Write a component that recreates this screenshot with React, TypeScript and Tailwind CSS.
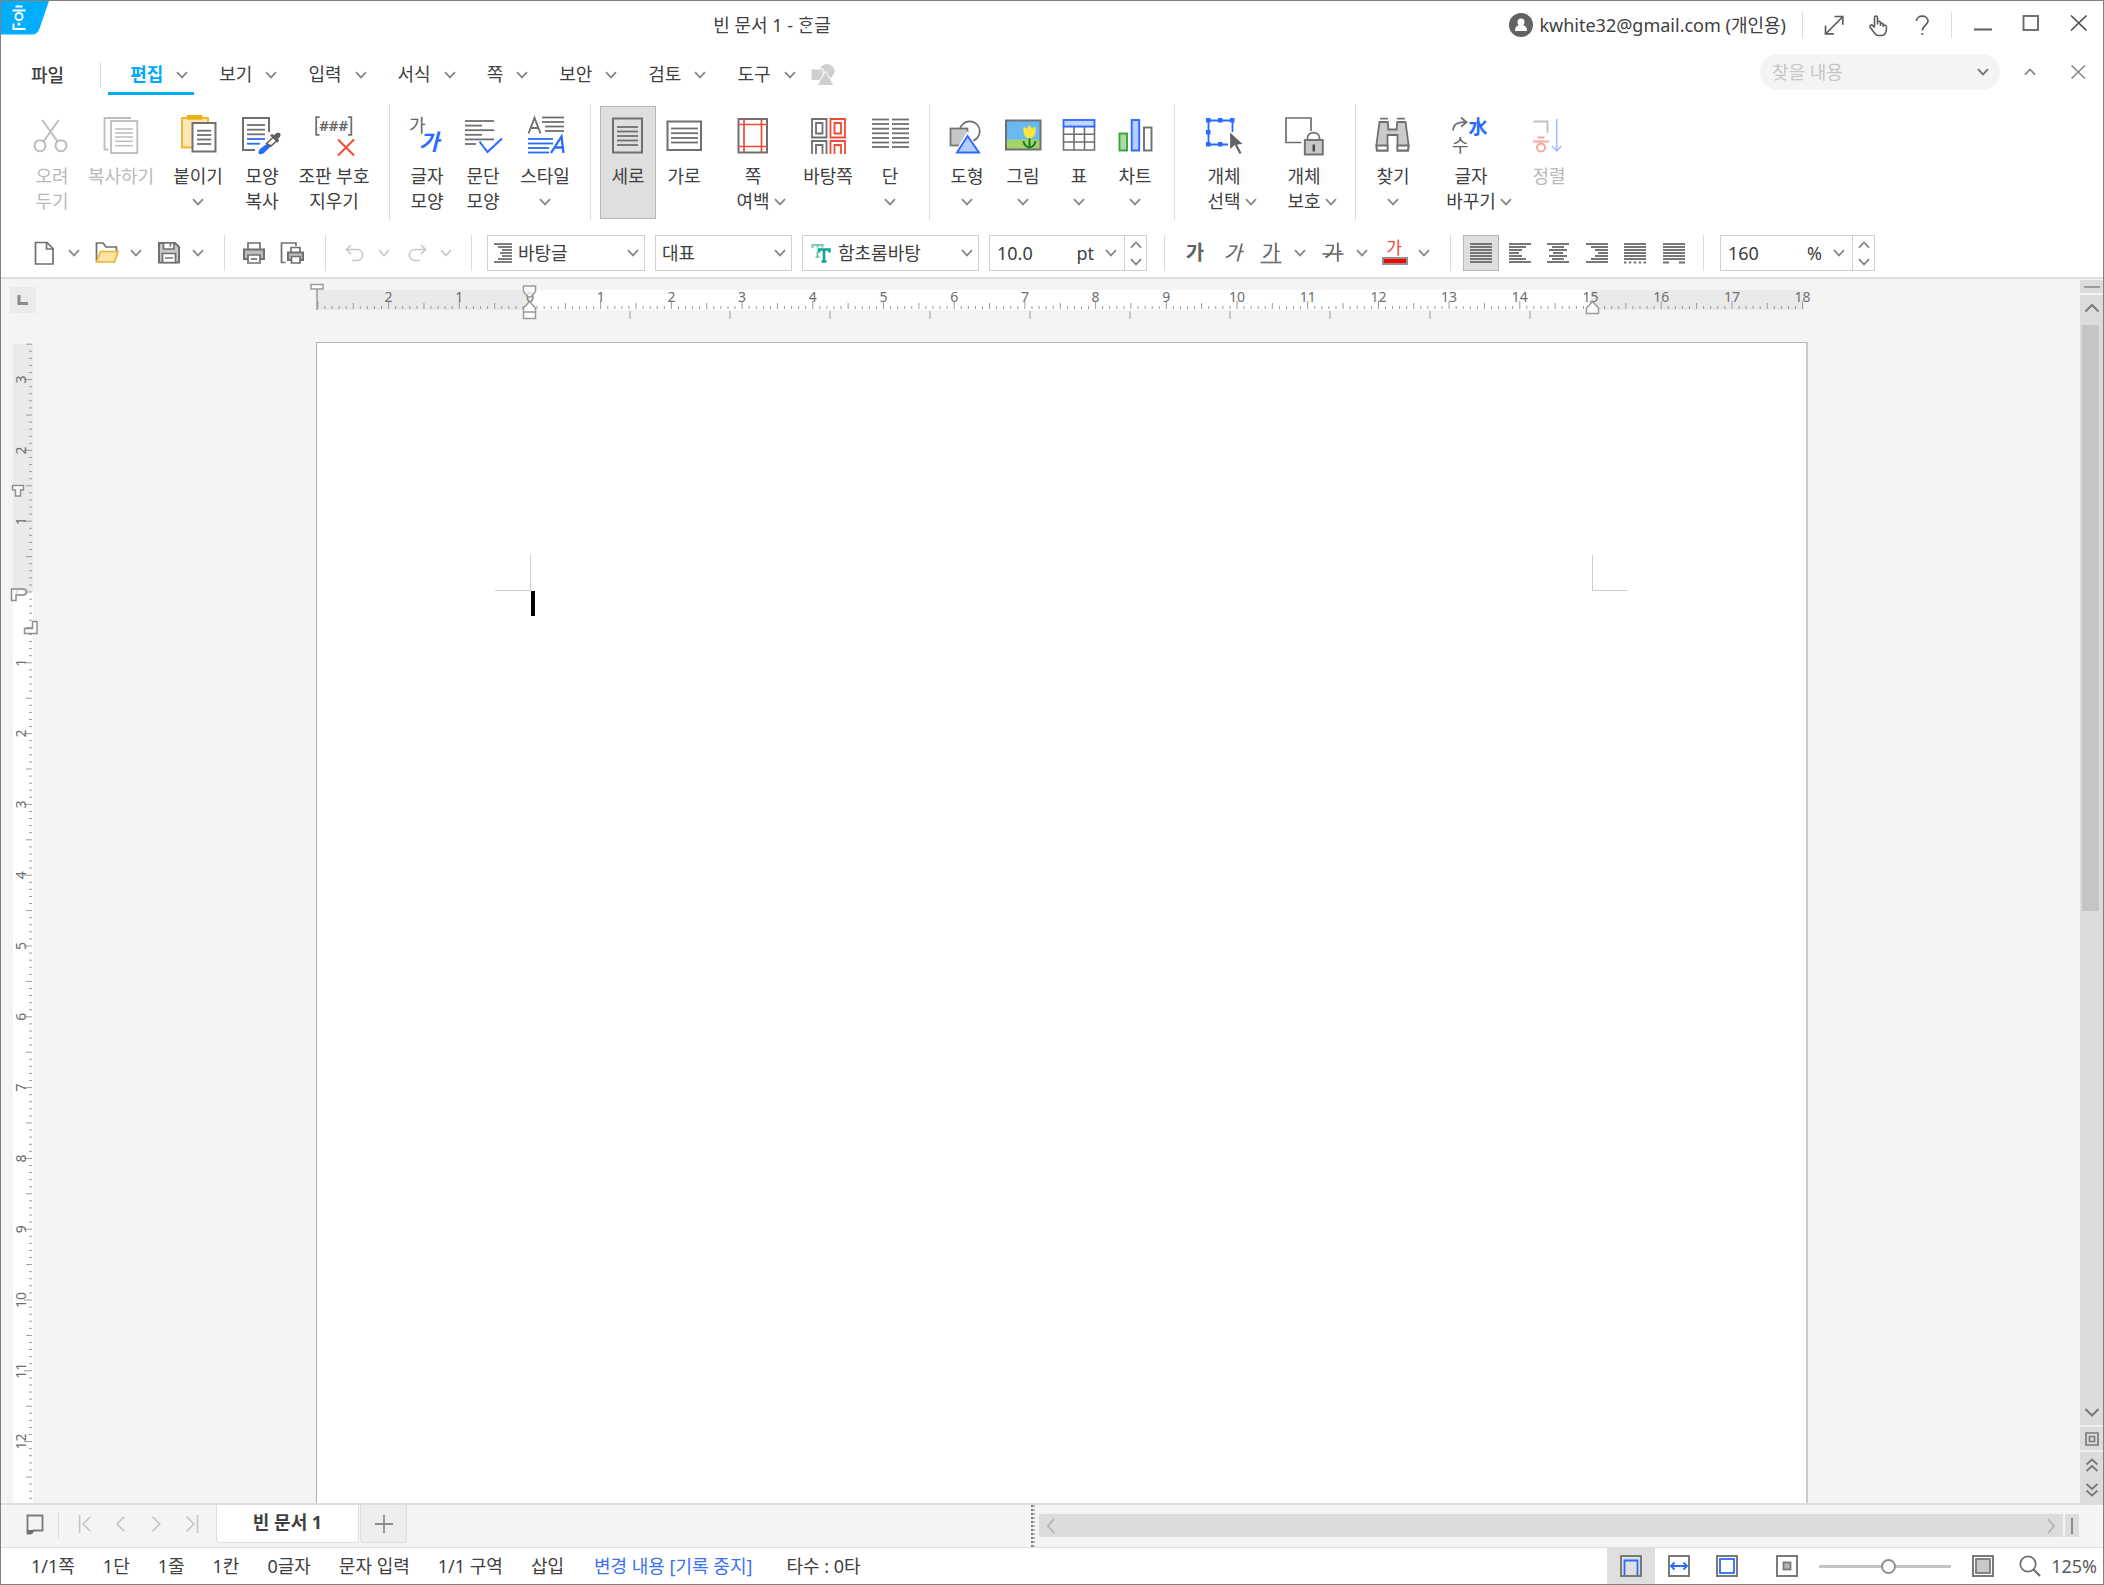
import type { ReactNode } from 'react';

const GRAY = '#707070';
const BLUE = '#2a6bff';
const RED = '#f04a36';
const FONT = "font-['Noto_Sans','Noto_Sans_CJK_KR',sans-serif]";

const range = (from: number, to: number) =>
  Array.from({ length: to - from + 1 }, (_, i) => from + i);

/* ---------- small shared pieces ---------- */

function Chevron({ dir = 'down', color = '#858585' }: { dir?: 'down' | 'up'; color?: string }) {
  return (
    <svg className="h-2 w-3 shrink-0" viewBox="0 0 12 8" fill="none" stroke={color} strokeWidth="1.7">
      <path d={dir === 'down' ? 'M1 1.2 6 6.4 11 1.2' : 'M1 6.6 6 1.4 11 6.6'} />
    </svg>
  );
}

function Divider({ className = '' }: { className?: string }) {
  return <span className={`w-px shrink-0 bg-[#dcdcdc] ${className}`} />;
}

function Lines({ x1, x2, ys, color = GRAY, w = 1.8 }: { x1: number; x2: number; ys: number[]; color?: string; w?: number }) {
  return (
    <g stroke={color} strokeWidth={w}>
      {ys.map((y) => (
        <line key={y} x1={x1} x2={x2} y1={y} y2={y} />
      ))}
    </g>
  );
}

/* ---------- ribbon icons, drawn on a 44x42 grid ---------- */

const icons: Record<string, ReactNode> = {
  cut: (
    <g stroke="#bdbdbd" strokeWidth="2">
      <circle cx="10" cy="31.7" r="5.5" />
      <circle cx="31" cy="31.7" r="5.5" />
      <path d="M12.3 6 27.5 27.5M28.7 6 13.5 27.5" />
    </g>
  ),
  copy: (
    <g stroke="#bdbdbd" strokeWidth="1.8">
      <path d="M32 4H5.5v31.5h4" />
      <rect x="12" y="7" width="26.3" height="32" />
      <Lines x1={16} x2={34} ys={[15, 19, 23, 27.3, 31.7]} color="#bdbdbd" w={1.5} />
    </g>
  ),
  paste: (
    <g>
      <rect x="6" y="4" width="26" height="29.5" fill="#fde6b3" stroke="#f2b632" strokeWidth="2" />
      <rect x="11" y="1" width="15.5" height="4.7" fill="#f0b017" />
      <rect x="16.5" y="9" width="23" height="28.5" fill="#fff" stroke={GRAY} strokeWidth="2" />
      <Lines x1={21} x2={35.3} ys={[16.7, 21, 25.5, 30]} />
    </g>
  ),
  format: (
    <g>
      <path d="M15 36H3V4h26v14" stroke={GRAY} strokeWidth="2" />
      <Lines x1={7} x2={25} ys={[11, 15.7, 20.3]} />
      <Lines x1={7} x2={25} ys={[25]} color={BLUE} />
      <Lines x1={7} x2={20} ys={[29.7]} color={BLUE} />
      <path d="m33 24-11.5 8.5c-2 2-3 4.5-2.5 6.2 1.8 1 4 0 5.5-1.5L35 27z" fill="#fff" />
      <path d="M32 26 27.5 29.5l-6.500 4.500c-2 2-3 4-2.500 5.500 1.800 1.200 4.500.8 6.500-1.500L34.500 29z" fill={BLUE} />
      <path d="m26.500 29.500 7-6.500 3.500 3.500-6 5.500z" fill="#fff" stroke="#5f5f5f" strokeWidth="1.500" />
      <path d="m30 21.500 2-1.500 2.200 1.200c1-2 3.500-3.200 5.500-2.200 1.800 1.800.5 4.500-1.500 5.600l.8 2.200-1.600 2z" fill="#5f5f5f" />
    </g>
  ),
  marks: (
    <g>
      <path d="M7.5 3.2H4.2v17.600h3.300M36 3.200h3.300v17.600H36" stroke={GRAY} strokeWidth="1.8" />
      <text x="21.700" y="16.5" textAnchor="middle" fontSize="15" fontWeight="600" fill="#666">###</text>
      <path d="m26 25.500 16 16m0-16-16 16" stroke={RED} strokeWidth="2" />
    </g>
  ),
  charShape: (
    <g>
      <text x="4" y="18" fontSize="18" fill="#666">가</text>
      <text x="14" y="36" fontSize="22" fontWeight="700" fontStyle="italic" fill={BLUE}>가</text>
    </g>
  ),
  paraShape: (
    <g>
      <Lines x1={4} x2={33} ys={[7, 16.2, 25.4]} />
      <Lines x1={4} x2={21} ys={[11.6, 20.8]} />
      <Lines x1={4} x2={15} ys={[30]} />
      <path d="m18.500 27.500 8 10.500L41 24.500" stroke={BLUE} strokeWidth="2" />
    </g>
  ),
  style: (
    <g>
      <path d="m5.500 19.500 6-15.500 6 15.500M7.500 14h8" stroke={GRAY} strokeWidth="1.9" />
      <Lines x1={19} x2={41} ys={[3.5, 8]} />
      <Lines x1={22} x2={41} ys={[12.5, 17]} />
      <Lines x1={5} x2={30} ys={[25, 29.5]} color={BLUE} />
      <Lines x1={5} x2={26} ys={[34, 38.5]} color={BLUE} />
      <path d="m28 39 10.500-16.500 2 16.500M31.500 33.500h8.300" stroke={BLUE} strokeWidth="2.3" />
    </g>
  ),
  portrait: (
    <g>
      <rect x="7" y="4.5" width="29" height="34" stroke={GRAY} strokeWidth="2" />
      <Lines x1={11} x2={32} ys={[13, 17.5, 22, 26.5, 31]} />
    </g>
  ),
  landscape: (
    <g>
      <rect x="5.5" y="7.5" width="33.5" height="28.5" stroke={GRAY} strokeWidth="2" />
      <Lines x1={9} x2={36} ys={[14.5, 19.2, 24, 28.5]} />
    </g>
  ),
  margin: (
    <g>
      <rect x="7.5" y="5" width="28.5" height="33.5" stroke={GRAY} strokeWidth="2" />
      <path d="M13 5v33.500M30.500 5v33.500M7.500 10.500H36M7.500 32.500H36" stroke={RED} strokeWidth="1.7" />
    </g>
  ),
  master: (
    <g strokeWidth="1.8">
      <path d="M6 5h14.500v18.500H6zM10 9h6.500v10.500H10zM6 40V27h14.500v13M10 40v-9h6.500v9" stroke={GRAY} />
      <path d="M24.500 5H39v18.500H24.500zM28.500 9H35v10.500h-6.500zM24.500 40V27H39v13M28.500 40v-9H35v9" stroke={RED} />
    </g>
  ),
  columns: (
    <g>
      <Lines x1={4} x2={21} ys={[5.5, 10, 14.7, 19.3, 24, 28.5, 33]} />
      <Lines x1={24} x2={41} ys={[5.5, 10, 14.7, 19.3, 24, 28.5, 33]} />
    </g>
  ),
  shapes: (
    <g>
      <circle cx="24.7" cy="17.3" r="10" stroke={GRAY} strokeWidth="1.7" />
      <rect x="5.5" y="14.5" width="17" height="17" fill="#c6c6c6" stroke={GRAY} strokeWidth="1.7" />
      <path d="M22.500 17 8.500 40.500h28z" fill="#fff" />
      <path d="M22.500 22 12 38.500h22z" fill="#b7ccff" stroke={BLUE} strokeWidth="1.9" />
    </g>
  ),
  picture: (
    <g>
      <rect x="5" y="6.5" width="34.5" height="29" fill="#69b8f2" />
      <rect x="5" y="25.5" width="34.5" height="10" fill="#a3d468" />
      <rect x="5" y="6.5" width="34.5" height="29" stroke={GRAY} strokeWidth="2" />
      <path d="M22.500 13c1.500 0 2.500.8 3.200 1.800L28.500 11l2.800 3.800c.7-1 1.700-1.800 3.200-1.800.8 6-1 11.500-6 11.500s-6.800-5.500-6-11.500z" fill="#ffe23a" />
      <path d="M28.500 24.500v9M22.500 27c.5 4 3 6 6 6.500 3-.5 5.500-2.500 6-6.500" stroke="#157a1c" strokeWidth="2" />
    </g>
  ),
  table: (
    <g>
      <path d="M6.500 12.500h31V36h-31zM17 12.500V36M27.500 12.500V36M6.500 20.300h31M6.500 28h31" stroke={GRAY} strokeWidth="1.6" />
      <rect x="6.5" y="6" width="31" height="6.5" fill="#c3d4ff" stroke={BLUE} strokeWidth="1.8" />
    </g>
  ),
  chart: (
    <g strokeWidth="1.9">
      <rect x="6.5" y="19.5" width="7.5" height="17" fill="#a9dca5" stroke="#3aa23a" />
      <rect x="18.7" y="6" width="7.5" height="30.5" fill="#b9cdff" stroke={BLUE} />
      <rect x="31" y="13.5" width="7.5" height="23" stroke={GRAY} />
    </g>
  ),
  select: (
    <g>
      <path d="M30.500 18V6.500h-24v24H26" stroke={BLUE} strokeWidth="1.8" />
      <path d="M4 4h4.500v4.500H4zM16 4h4.500v4.500H16zM28 4h4.500v4.500H28zM4 16h4.500v4.500H4zM4 28h4.500v4.500H4zM16 28h4.500v4.500H16z" fill={BLUE} />
      <path d="m28 18.500.3 16.500 4.500-4.300 7.700-.7z" fill="#626262" />
      <path d="m33 29 5.500 10.500" stroke="#626262" strokeWidth="2.2" />
    </g>
  ),
  protect: (
    <g>
      <path d="M29 17V4H4v24.500h15.500" stroke={GRAY} strokeWidth="1.7" />
      <path d="M25.500 25v-1c0-7.200 12-7.200 12 0v1" stroke={GRAY} strokeWidth="1.8" />
      <rect x="22.800" y="26" width="18" height="14.5" fill="#c8c8c8" stroke={GRAY} strokeWidth="1.9" />
      <path d="M31.800 30.500v7" stroke="#4c4c4c" strokeWidth="2.5" />
    </g>
  ),
  find: (
    <g stroke={GRAY} strokeWidth="1.8">
      <path d="M9 4.700h8M26 4.700h8" />
      <path d="M8.500 8h8.300l.6 7.500h8.200l.6-7.500h8.300l3.200 24-.5 4.500H26.500V21h-10v15.500H5.800L5.300 32z" fill="#cbcbcb" />
      <path d="M5.500 31.500h11v5H6.200zM26.500 31.500h11l-.7 5H26.500z" fill="#fff" />
    </g>
  ),
  convert: (
    <g>
      <path d="M4 16.500c.3-6 5-9 13-8.300M12 3.500l5.500 4.800-5.500 4.500" stroke={GRAY} strokeWidth="1.8" />
      <text x="19.5" y="19.8" fontSize="19" fontWeight="700" fill={BLUE}>水</text>
      <text x="3" y="38" fontSize="18" fill="#666">수</text>
    </g>
  ),
  sort: (
    <g>
      <path d="M6.500 7.500h14v11.500" stroke="#c2c2c2" strokeWidth="1.9" />
      <path d="M10.500 23.500h7M6 27.500h16" stroke="#f6a79d" strokeWidth="2" />
      <circle cx="14" cy="33.5" r="4" stroke="#f6a79d" strokeWidth="2" />
      <path d="M29.700 5v31.500M25 32l4.700 5 4.700-5" stroke="#a9c2ff" strokeWidth="1.7" />
    </g>
  ),
};

type RibbonItem = {
  icon: string;
  lines: string[];
  width: string;
  menu?: 'below' | 'inline';
  disabled?: boolean;
  active?: boolean;
};

const ribbon: RibbonItem[][] = [
  [
    { icon: 'cut', lines: ['오려', '두기'], width: 'w-14', disabled: true },
    { icon: 'copy', lines: ['복사하기'], width: 'w-[82px]', disabled: true },
    { icon: 'paste', lines: ['붙이기'], width: 'w-[72px]', menu: 'below' },
    { icon: 'format', lines: ['모양', '복사'], width: 'w-14' },
    { icon: 'marks', lines: ['조판 부호', '지우기'], width: 'w-[88px]' },
  ],
  [
    { icon: 'charShape', lines: ['글자', '모양'], width: 'w-14' },
    { icon: 'paraShape', lines: ['문단', '모양'], width: 'w-14' },
    { icon: 'style', lines: ['스타일'], width: 'w-[68px]', menu: 'below' },
  ],
  [
    { icon: 'portrait', lines: ['세로'], width: 'w-14', active: true },
    { icon: 'landscape', lines: ['가로'], width: 'w-14' },
    { icon: 'margin', lines: ['쪽', '여백'], width: 'w-[82px]', menu: 'inline' },
    { icon: 'master', lines: ['바탕쪽'], width: 'w-[68px]' },
    { icon: 'columns', lines: ['단'], width: 'w-14', menu: 'below' },
  ],
  [
    { icon: 'shapes', lines: ['도형'], width: 'w-14', menu: 'below' },
    { icon: 'picture', lines: ['그림'], width: 'w-14', menu: 'below' },
    { icon: 'table', lines: ['표'], width: 'w-14', menu: 'below' },
    { icon: 'chart', lines: ['차트'], width: 'w-14', menu: 'below' },
  ],
  [
    { icon: 'select', lines: ['개체', '선택'], width: 'w-20', menu: 'inline' },
    { icon: 'protect', lines: ['개체', '보호'], width: 'w-20', menu: 'inline' },
  ],
  [
    { icon: 'find', lines: ['찾기'], width: 'w-14', menu: 'below' },
    { icon: 'convert', lines: ['글자', '바꾸기'], width: 'w-[100px]', menu: 'inline' },
    { icon: 'sort', lines: ['정렬'], width: 'w-14', disabled: true },
  ],
];

function RibbonButton({ item }: { item: RibbonItem }) {
  return (
    <button
      disabled={item.disabled}
      className={`flex shrink-0 flex-col items-center border pt-[7px] ${item.width} ${
        item.active ? 'border-[#b5b5b5] bg-[#dfdfdf]' : 'border-transparent'
      } ${item.disabled ? 'text-[#b9b9b9]' : ''}`}
    >
      <svg className="mb-2 h-[42px] w-11 shrink-0 overflow-visible" viewBox="0 0 44 42" fill="none">
        {icons[item.icon]}
      </svg>
      {item.lines.map((line, i) => (
        <span key={line} className="flex h-[25px] items-center whitespace-nowrap leading-[25px]">
          {item.menu === 'inline' && i === 1 ? (
            <>
              <span className="w-4" />
              {line}
              <span className="flex w-4 justify-end">
                <Chevron />
              </span>
            </>
          ) : (
            line
          )}
        </span>
      ))}
      {item.menu === 'below' && (
        <span className="flex h-[25px] items-center">
          <Chevron />
        </span>
      )}
    </button>
  );
}

/* ---------- title bar and menu ---------- */

function TitleBar() {
  return (
    <header className="flex h-12 items-center">
      <div className="flex flex-1 self-start">
        <svg className="h-[34px] w-12" viewBox="0 0 48 34" fill="none">
          <path d="M0 0h48L38.500 27.500C37 31.500 35 33.500 30.500 33.500H0z" fill="#00aeff" />
          <g stroke="#fff" strokeWidth="2">
            <path d="M14.500 5.500h7M11.500 9.500h13" />
            <circle cx="18" cy="15.5" r="3.6" />
            <path d="M12.500 22.500v5.500h12" />
          </g>
          <circle cx="18" cy="23" r="1.6" fill="#fff" />
        </svg>
      </div>
      <h1 className="pr-[548px]">빈 문서 1 - ᄒᆞᆫ글</h1>
      <div className="flex flex-1 items-center justify-end pr-3">
        <button className="flex items-center gap-1.5 whitespace-nowrap">
          <svg className="size-6" viewBox="0 0 24 24">
            <circle cx="12" cy="12" r="12" fill="#626262" />
            <circle cx="12" cy="9" r="3.5" fill="#fff" />
            <path d="M6 18c0-5 2.500-6 6-6s6 1 6 6z" fill="#fff" />
          </svg>
          kwhite32@gmail.com (개인용)
        </button>
        <Divider className="ml-4 mr-[19px] h-[26px]" />
        <div className="flex gap-5">
          <button aria-label="전체 화면">
            <svg className="size-6" viewBox="0 0 24 24" fill="none" stroke="#5c5c5c" strokeWidth="1.7">
              <path d="M4 20.500 20.500 4M12.500 3.500h8.300v8.300M3.500 12.500v8.300h8.300" />
            </svg>
          </button>
          <button aria-label="터치 모드">
            <svg className="size-6" viewBox="0 0 24 24" fill="none" stroke="#5c5c5c" strokeWidth="1.6" strokeLinejoin="round">
              <path d="M8.500 14V4.500c0-2 3-2 3 0V11V8.500c2.500-.8 3 .5 3 2 1.800-.6 2.800.2 2.800 1.500 2-.3 3.200.6 3.200 2.500 0 4-.8 8-5 8h-3c-3 0-4-2-5.500-4.500L4 14c-.8-1.800 1.500-2.800 2.800-1.300z" />
              <path d="M14.500 10.500V13M17.300 12v2" />
            </svg>
          </button>
          <button aria-label="도움말">
            <svg className="size-6" viewBox="0 0 24 24" fill="none" stroke="#5c5c5c" strokeWidth="1.7">
              <path d="M6.500 8c0-6.500 11.500-6.500 11.500 0 0 4.500-5.700 4-5.700 9.500M12.300 20v2" />
            </svg>
          </button>
        </div>
        <Divider className="ml-[17px] mr-[19px] h-[26px]" />
        <div className="flex items-center gap-6 pb-1">
          <button aria-label="최소화">
            <svg className="size-6" viewBox="0 0 24 24" fill="none">
              <path d="M3 18.500h18" stroke="#6a6a6a" strokeWidth="2.2" />
            </svg>
          </button>
          <button aria-label="최대화">
            <svg className="size-6" viewBox="0 0 24 24" fill="none">
              <rect x="4.5" y="5" width="14.5" height="14" stroke="#6a6a6a" strokeWidth="1.9" />
            </svg>
          </button>
          <button aria-label="닫기">
            <svg className="size-6" viewBox="0 0 24 24" fill="none">
              <path d="m4 4.500 15.500 15m0-15L4 19.500" stroke="#4c4c4c" strokeWidth="1.7" />
            </svg>
          </button>
        </div>
      </div>
    </header>
  );
}

const menus = ['편집', '보기', '입력', '서식', '쪽', '보안', '검토', '도구'];

function MenuBar() {
  return (
    <nav className="flex h-[52px] items-center pl-[30px] pr-3">
      <button className="font-medium">파일</button>
      <Divider className="ml-9 mr-[7px] h-[26px]" />
      <div className="flex items-center gap-[3px] self-stretch">
        {menus.map((name) => (
          <button
            key={name}
            className={`flex h-[46px] items-center gap-[13px] self-start border-b-[3px] pl-[22px] pr-1.5 pt-2 ${
              name === '편집' ? 'border-[#00aeef] font-bold text-[#00a8ff]' : 'border-transparent'
            }`}
          >
            {name}
            <Chevron />
          </button>
        ))}
      </div>
      <svg className="ml-[9px] size-6" viewBox="0 0 24 24">
        <circle cx="16" cy="8.5" r="7.5" fill="#cfcfcf" />
        <rect x="0" y="6" width="12" height="11.5" fill="#cfcfcf" stroke="#fff" />
        <path d="M14.500 8 6 22.500h17z" fill="#cfcfcf" stroke="#fff" />
      </svg>
      <div className="ml-auto flex items-center pb-1.5">
        <label className="flex h-9 w-60 items-center rounded-full bg-[#f4f4f4] pl-3 pr-[11px]">
          <input
            type="text"
            placeholder="찾을 내용"
            aria-label="찾을 내용"
            className="min-w-0 flex-1 bg-transparent outline-none placeholder:text-[#c6c6c6]"
          />
          <Chevron color="#707070" />
        </label>
        <button className="ml-6 flex w-3" aria-label="리본 접기">
          <Chevron dir="up" />
        </button>
        <button className="ml-[31px]" aria-label="문서 닫기">
          <svg className="size-6" viewBox="0 0 24 24" fill="none">
            <path d="m4.500 5.500 13.500 13m0-13-13.500 13" stroke="#858585" strokeWidth="1.6" />
          </svg>
        </button>
      </div>
    </nav>
  );
}

/* ---------- formatting toolbar ---------- */

function ToolButton({ label, children, disabled }: { label: string; children: ReactNode; disabled?: boolean }) {
  return (
    <button aria-label={label} disabled={disabled} className="flex h-9 w-[26px] shrink-0 items-center justify-center">
      <svg className="size-6 overflow-visible" viewBox="0 0 24 24" fill="none" stroke={GRAY} strokeWidth="1.7">
        {children}
      </svg>
    </button>
  );
}

function SplitButton({ label, children, disabled }: { label: string; children: ReactNode; disabled?: boolean }) {
  return (
    <div className="flex shrink-0 gap-1.5">
      <ToolButton label={label} disabled={disabled}>
        {children}
      </ToolButton>
      <button aria-label={`${label} 목록`} disabled={disabled} className="flex w-5 items-center justify-center">
        <Chevron color={disabled ? '#c8c8c8' : '#858585'} />
      </button>
    </div>
  );
}

function Glyph({ bold, italic, color = '#626262' }: { bold?: boolean; italic?: boolean; color?: string }) {
  return (
    <text
      x="12"
      y="19"
      textAnchor="middle"
      fontSize="20"
      fontWeight={bold ? 600 : 400}
      fontStyle={italic ? 'italic' : 'normal'}
      fill={color}
      stroke="none"
    >
      가
    </text>
  );
}

function Combo({ label, value, width, pad, icon }: { label: string; value: string; width: string; pad: string; icon?: ReactNode }) {
  return (
    <div className={`relative flex h-9 shrink-0 items-center border border-[#d0d0d0] ${width}`}>
      {icon && <span className="pointer-events-none absolute left-1.5">{icon}</span>}
      <select aria-label={label} className={`h-full w-full appearance-none bg-transparent pr-6 outline-none ${pad}`}>
        <option>{value}</option>
      </select>
      <span className="pointer-events-none absolute right-[5px] flex">
        <Chevron />
      </span>
    </div>
  );
}

function NumberBox({ label, value, unit, width }: { label: string; value: string; unit: string; width: string }) {
  return (
    <div className={`flex h-9 shrink-0 items-stretch border border-[#d0d0d0] ${width}`}>
      <input type="text" aria-label={label} defaultValue={value} className="w-0 min-w-0 flex-1 bg-transparent pl-[7px] outline-none" />
      <span className="flex items-center">{unit}</span>
      <button aria-label={`${label} 목록`} className="flex w-[30px] items-center justify-center pl-1">
        <Chevron />
      </button>
      <div className="flex w-[22px] flex-col border-l border-[#d0d0d0]">
        <button aria-label={`${label} 늘리기`} className="flex flex-1 items-center justify-center">
          <Chevron dir="up" />
        </button>
        <button aria-label={`${label} 줄이기`} className="flex flex-1 items-center justify-center">
          <Chevron />
        </button>
      </div>
    </div>
  );
}

// start / end of every text row in the six alignment icons
const full: [number, number] = [1, 23];
const alignments: { label: string; rows: [number, number][]; dots?: 'many' | 'few' }[] = [
  { label: '양쪽 정렬', rows: [full, full, full, full, full, full, full] },
  { label: '왼쪽 정렬', rows: [full, [1, 18], [1, 14], [1, 11], [1, 14], [1, 18], full] },
  { label: '가운데 정렬', rows: [full, [6, 18], [3, 21], [7, 17], [3, 21], [6, 18], full] },
  { label: '오른쪽 정렬', rows: [full, [6, 23], [10, 23], [13, 23], [10, 23], [6, 23], full] },
  { label: '배분 정렬', rows: [full, full, full, full, full, full], dots: 'many' },
  { label: '나눔 정렬', rows: [full, full, full, full, full, full], dots: 'few' },
];

function FormatBar() {
  return (
    <div className="flex items-center border-b-2 border-[#dedede] pb-1.5 pl-[31px] pt-[15px]">
      <div className="flex gap-2.5">
        <SplitButton label="새 문서">
          <path d="M2.500 1.500h11.500l6 6v15.500H2.500zM13.500 1.500v6.500h6.500" />
        </SplitButton>
        <SplitButton label="불러오기">
          <path d="M1.500 20V2h6.500l3 4h10.500v5" />
          <path d="M5.500 10.500h17.500l-3.500 10.500H1.500z" fill="#fbe3ac" stroke="#f0b429" />
        </SplitButton>
        <SplitButton label="저장하기">
          <path d="M2 2h16l4 4v15.500H2z" fill="#c8c8c8" strokeWidth="2" />
          <path d="M6.500 2h10.500v6H6.500zM5.500 12.500h13v9h-13z" fill="#fff" />
          <path d="M13.500 2.500v3M8 17h8" />
        </SplitButton>
      </div>
      <Divider className="mx-4 h-9" />
      <div className="flex gap-3">
        <ToolButton label="인쇄">
          <path d="M6 8V2h12v6" fill="#fff" />
          <path d="M2 8.500h20v9.500H2z" fill="#bdbdbd" strokeWidth="2" />
          <path d="M6 14h12v8H6z" fill="#fff" />
          <path d="M9 18h6" />
        </ToolButton>
        <ToolButton label="미리 보기">
          <path d="M5.500 21.500h-4V2h14.500v3" />
          <path d="M11 11V6.500h9V11" fill="#fff" />
          <path d="M8 11.500h15v7.500H8z" fill="#bdbdbd" strokeWidth="2" />
          <path d="M11.500 15.500h8.500v6.500h-8.500z" fill="#fff" />
        </ToolButton>
      </div>
      <Divider className="ml-5 mr-4 h-9" />
      <div className="flex gap-2.5">
        <SplitButton label="되돌리기" disabled>
          <path d="M8 4 3.500 8.500 8 13M3.500 8.500H14c7.500 0 7.500 11 0 11H9" stroke="#c8c8c8" />
        </SplitButton>
        <SplitButton label="다시 실행" disabled>
          <path d="m16 4 4.500 4.500L16 13M20.500 8.500H10c-7.500 0-7.500 11 0 11h5" stroke="#c8c8c8" />
        </SplitButton>
      </div>
      <Divider className="mx-[15px] h-9" />
      <div className="flex gap-2.5">
        <Combo
          label="스타일"
          value="바탕글"
          width="w-[158px]"
          pad="pl-[30px]"
          icon={
            <svg className="h-5 w-[18px]" viewBox="0 0 18 20" fill="none">
              <Lines x1={0} x2={18} ys={[1, 19]} />
              <Lines x1={4} x2={18} ys={[4, 16]} />
              <Lines x1={8} x2={18} ys={[7, 13]} />
              <Lines x1={6} x2={18} ys={[10]} />
            </svg>
          }
        />
        <Combo label="언어" value="대표" width="w-[137px]" pad="pl-1.5" />
        <Combo
          label="글꼴"
          value="함초롬바탕"
          width="w-[177px]"
          pad="pl-[35px]"
          icon={
            <svg className="ml-[2px] h-5 w-5" viewBox="0 0 20 20" fill="none">
              <path d="M1.500 5V2h10v3M6.500 2v12M4.500 14h4" stroke="#7cc9b0" strokeWidth="2" />
              <path d="M7.500 9V6.500h11V9M13 6.500V18M10.500 18.500h5" stroke="#fff" strokeWidth="4" />
              <path d="M8 9.500V6.500h10.500v3M13 6.500V18M10.500 18.500h5" stroke="#12a594" strokeWidth="2.6" />
            </svg>
          }
        />
        <NumberBox label="글자 크기" value="10.0" unit="pt" width="w-[158px]" />
      </div>
      <Divider className="mx-[17px] h-9" />
      <div className="flex gap-3">
        <ToolButton label="진하게">
          <Glyph bold />
        </ToolButton>
        <ToolButton label="기울임">
          <Glyph italic />
        </ToolButton>
        <div className="flex gap-2.5">
          <SplitButton label="밑줄">
            <Glyph />
            <path d="M1.500 21.500h21" />
          </SplitButton>
          <SplitButton label="취소선">
            <Glyph />
            <path d="M1.500 13h21" />
          </SplitButton>
          <SplitButton label="글자 색">
            <text x="11" y="13" textAnchor="middle" fontSize="17" fill={RED} stroke="none">
              가
            </text>
            <rect x="-1" y="16" width="26" height="8" fill="#8f8f8f" stroke="none" />
            <rect x="1" y="18" width="22" height="4" fill="#ff0000" stroke="none" />
          </SplitButton>
        </div>
      </div>
      <Divider className="ml-4 mr-3 h-9" />
      <div className="flex w-[229px] shrink-0 justify-between">
        {alignments.map(({ label, rows, dots }, i) => (
          <button
            key={label}
            aria-label={label}
            className={`flex size-9 items-center justify-center border ${
              i === 0 ? 'border-[#b5b5b5] bg-[#dfdfdf]' : 'border-transparent'
            }`}
          >
            <svg className="size-6" viewBox="0 0 24 24" stroke={GRAY} strokeWidth="1.9">
              {rows.map(([a, b], r) => (
                <line key={r} x1={a} x2={b} y1={3 + r * 3} y2={3 + r * 3} />
              ))}
              {dots && <line x1="1" x2="23" y1="21.5" y2="21.5" strokeDasharray={dots === 'many' ? '2.4 2.5' : '6 10'} />}
            </svg>
          </button>
        ))}
      </div>
      <Divider className="ml-[11px] mr-4 h-9" />
      <NumberBox label="줄 간격" value="160" unit="%" width="w-[155px]" />
    </div>
  );
}

/* ---------- rulers ---------- */

const tickSize = (i: number) => (i % 10 === 0 ? 8 : i % 5 === 0 ? 6 : 3);

function HorizontalRuler() {
  const zero = 214;
  const cm = 70.7;
  return (
    <svg className="h-full w-[1492px] overflow-visible" viewBox="0 0 1492 63">
      <rect x="1" y="11" width="1487" height="20" fill="#eaeaea" />
      <rect x={zero} y="11" width={cm * 15} height="20" fill="#fff" />
      <g stroke="#9c9c9c" strokeWidth="1">
        {range(-30, 180).map((i) => (
          <line key={i} x1={zero + (i * cm) / 10} x2={zero + (i * cm) / 10} y1={30 - tickSize(i)} y2={30} />
        ))}
        {range(1, 10).map((i) => (
          <line key={i} x1={zero + i * 100} x2={zero + i * 100} y1="32" y2="40" />
        ))}
      </g>
      <g fontSize="14" fill="#6e6e6e" textAnchor="middle">
        {range(-2, 18).map((n) => (
          <text key={n} x={zero + n * cm} y="23">
            {Math.abs(n)}
          </text>
        ))}
      </g>
      <g fill="#fff" stroke="#9a9a9a" strokeWidth="1.5">
        <path d="M1 10v21" />
        <rect x="-5" y="5.5" width="12" height="4.5" />
        <path d="M207.500 7h12v5.500L215 18h-3l-4.500-5.500z" fillOpacity="0.7" />
        <path d="M213.500 22.500 219.500 29v10.500h-12V29zM207.500 33h12" />
        <path d="M1276.500 22.500 1282.500 29v5.500h-12V29z" />
      </g>
    </svg>
  );
}

function VerticalRuler() {
  const zero = 250;
  const cm = 70.8;
  return (
    <svg className="h-[2400px] w-[43px]" viewBox="0 0 43 2400">
      <rect x="12" y="2" width="20" height="2398" fill="#fff" />
      <rect x="12" y="2" width="20" height={zero - 2} fill="#eaeaea" />
      <g stroke="#9c9c9c" strokeWidth="1">
        {range(-35, 300).map((i) => (
          <line key={i} x1={31 - tickSize(i)} x2="31" y1={zero + (i * cm) / 10} y2={zero + (i * cm) / 10} />
        ))}
      </g>
      <g fontSize="14" fill="#6e6e6e" textAnchor="middle">
        {range(-3, 12).map((n) => (
          <text key={n} transform={`translate(25 ${zero + n * cm}) rotate(-90)`}>
            {Math.abs(n)}
          </text>
        ))}
      </g>
      <g fill="#fff" stroke="#8f8f8f" strokeWidth="1.5">
        <path d="M11.500 143.500h11v4.500h-3v6h-5v-6h-3z" />
        <path d="M10.500 247h12c4 0 4 6 0 6h-7.500v5.500h-4.500z" fillOpacity="0.7" />
        <path d="M31.500 279.500h4.500v12H23.500v-5h8z" />
      </g>
    </svg>
  );
}

/* ---------- document area ---------- */

function VerticalScroll() {
  return (
    <div className="row-span-2 flex flex-col border-t border-[#f4f4f4] bg-[#dcdcdc]">
      <button aria-label="가로로 나누기" className="flex h-[15px] w-full items-center justify-center border-b-2 border-[#f4f4f4]">
        <span className="h-0.5 w-4 bg-[#9a9a9a]" />
      </button>
      <button aria-label="위로" className="flex h-[30px] items-center justify-center pb-1">
        <svg className="h-3 w-4" viewBox="0 0 16 12" fill="none" stroke="#7a7a7a" strokeWidth="2">
          <path d="M1.500 9.500 8 3l6.500 6.500" />
        </svg>
      </button>
      <div className="flex flex-1 flex-col pl-0.5 pr-1">
        <div className="flex-[6] bg-[#c5c5c5]" />
        <div className="flex-[5]" />
      </div>
      <button aria-label="아래로" className="flex h-[26px] items-center justify-center">
        <svg className="h-3 w-4" viewBox="0 0 16 12" fill="none" stroke="#7a7a7a" strokeWidth="2">
          <path d="M1.500 3 8 9.500 14.500 3" />
        </svg>
      </button>
      <button aria-label="이동 단위" className="flex h-[27px] items-center justify-center border-y-2 border-[#efefef]">
        <svg className="size-[14px]" viewBox="0 0 14 14" fill="none" stroke="#7a7a7a" strokeWidth="1.7">
          <path d="M1 1h12v12H1zM4.500 4.500h5v5h-5z" />
        </svg>
      </button>
      <button aria-label="이전 쪽" className="flex h-[25px] items-center justify-center">
        <svg className="size-3.5" viewBox="0 0 14 14" fill="none" stroke="#7a7a7a" strokeWidth="1.9">
          <path d="m1.500 6.500 5.500-5 5.500 5M1.500 13 7 8l5.500 5" />
        </svg>
      </button>
      <button aria-label="다음 쪽" className="flex h-[26px] items-center justify-center">
        <svg className="size-3.5" viewBox="0 0 14 14" fill="none" stroke="#7a7a7a" strokeWidth="1.9">
          <path d="m1.500 1 5.500 5 5.500-5M1.500 7.500l5.500 5 5.500-5" />
        </svg>
      </button>
    </div>
  );
}

function Workspace() {
  return (
    <main className="grid min-h-0 flex-1 grid-cols-[42px_minmax(0,1fr)_23px] grid-rows-[63px_minmax(0,1fr)] bg-[#f4f4f4]">
      <div className="pl-[9px] pt-2">
        <button aria-label="탭 종류" className="flex size-[26px] items-center justify-center bg-[#ebebeb]">
          <svg className="size-3" viewBox="0 0 12 12" fill="none" stroke="#8a8a8a" strokeWidth="3">
            <path d="M2 1v8.500h9" />
          </svg>
        </button>
      </div>
      <div className="flex justify-center">
        <HorizontalRuler />
      </div>
      <VerticalScroll />
      <div className="overflow-hidden">
        <VerticalRuler />
      </div>
      <div className="flex justify-center overflow-hidden">
        <div className="w-[1492px] shrink-0 border border-b-0 border-r-2 border-[#b4b4b4] border-r-[#cbcbcb] bg-white px-[178px] pt-[212px]">
          {/* margin corner marks and the text caret */}
          <div className="flex justify-between">
            <div className="size-9 border-b border-r border-[#cfcfcf]" />
            <div className="size-9 border-b border-l border-[#cfcfcf]" />
          </div>
          <div className="ml-9 h-[25px] w-1 bg-black" />
        </div>
      </div>
    </main>
  );
}

/* ---------- document tabs and status bar ---------- */

const pageNav = [
  { label: '처음', d: 'M2 2v20M14 4 6 12l8 8' },
  { label: '이전', d: 'M11.500 4 3.500 12l8 8' },
  { label: '다음', d: 'm3 4 8 8-8 8' },
  { label: '끝', d: 'm1 4 8 8-8 8M13 2v20' },
];

function TabBar() {
  return (
    <div className="flex h-11 border-t-2 border-[#dedede] bg-[#f4f4f4]">
      <div className="flex w-[49%] items-start pl-[25px]">
        <button aria-label="문서 목록" className="mt-2">
          <svg className="h-[22px] w-[18px]" viewBox="0 0 18 22" fill="none">
            <path d="M1.500 2.500h15v15h-9l-3 3H1.500z" stroke="#7a7a7a" strokeWidth="1.8" />
            <path d="M1 17h8l-3 4H1z" fill="#6f6f6f" />
          </svg>
        </button>
        <Divider className="ml-[14px] mr-[18px] mt-[7px] h-[26px]" />
        <div className="mt-2.5 flex gap-5">
          {pageNav.map(({ label, d }) => (
            <button key={label} aria-label={label}>
              <svg className="h-[18px] w-4" viewBox="0 2 16 20" fill="none" stroke="#c4c4c4" strokeWidth="1.8">
                <path d={d} />
              </svg>
            </button>
          ))}
        </div>
        <button className="ml-[15px] h-[38px] w-[143px] rounded-b border border-t-0 border-[#dedede] bg-white pb-0.5 font-bold">
          빈 문서 1
        </button>
        <button aria-label="새 탭" className="ml-px flex h-[38px] w-[47px] items-center justify-center rounded-b border border-t-0 border-[#dedede] bg-[#eee]">
          <svg className="size-[18px]" viewBox="0 0 18 18" stroke="#8c8c8c" strokeWidth="1.8">
            <path d="M9 0v18M0 9h18" />
          </svg>
        </button>
      </div>
      <div className="w-1 border-x-2 border-dotted border-l-[#7c7c7c] border-r-[#b8b8b8]" />
      <div className="ml-1 mt-[9px] flex h-[23px] flex-1 items-center justify-between bg-[#dcdcdc] px-1.5">
        {['M9 2 3 9l6 7', 'm3 2 6 7-6 7'].map((d) => (
          <button key={d} aria-label={d.startsWith('M') ? '왼쪽으로' : '오른쪽으로'}>
            <svg className="h-[18px] w-3" viewBox="0 0 12 18" fill="none" stroke="#b2b2b2" strokeWidth="1.8">
              <path d={d} />
            </svg>
          </button>
        ))}
      </div>
      <button aria-label="세로로 나누기" className="ml-0.5 mr-6 mt-[9px] flex h-[23px] w-[14px] items-center justify-center bg-[#dcdcdc]">
        <span className="h-4 w-0.5 bg-[#8c8c8c]" />
      </button>
    </div>
  );
}

function ViewIcon({ children }: { children?: ReactNode }) {
  return (
    <svg className="size-[22px]" viewBox="0 0 22 22" fill="none" strokeWidth="1.8">
      <rect x="1" y="1" width="20" height="20" stroke="#7a7a7a" strokeWidth="2" />
      {children}
    </svg>
  );
}

function StatusBar() {
  return (
    <footer className="flex h-[37px] items-center border-t border-[#dedede] pl-[30px] pr-1.5">
      <div className="flex gap-7 whitespace-nowrap">
        <span>1/1쪽</span>
        <span>1단</span>
        <span>1줄</span>
        <span>1칸</span>
        <span>0글자</span>
        <span>문자 입력</span>
        <span>1/1 구역</span>
        <span>삽입</span>
        <span className="pl-0.5 pr-1.5 text-[#3a70f5]">변경 내용 [기록 중지]</span>
        <span>타수 : 0타</span>
      </div>
      <div className="ml-auto flex items-center self-stretch">
        <button aria-label="쪽 맞춤" className="flex h-full w-12 items-center justify-center bg-[#dfdfdf]">
          <ViewIcon>
            <path d="M4.500 20V5.500h13V20" stroke={BLUE} />
          </ViewIcon>
        </button>
        <button aria-label="폭 맞춤" className="flex h-full w-12 items-center justify-center">
          <ViewIcon>
            <path d="M3 11h16M6.500 7.500 3 11l3.500 3.500M15.500 7.500 19 11l-3.500 3.500" stroke={BLUE} />
          </ViewIcon>
        </button>
        <button aria-label="쪽 모양" className="flex h-full w-12 items-center justify-center">
          <ViewIcon>
            <rect x="4" y="4" width="14" height="14" stroke={BLUE} />
          </ViewIcon>
        </button>
        <button aria-label="축소" className="ml-3 flex h-full w-12 items-center justify-center">
          <ViewIcon>
            <rect x="7.5" y="7.5" width="7" height="7" fill="#b5b5b5" stroke="#7a7a7a" />
          </ViewIcon>
        </button>
        <input
          type="range"
          aria-label="확대 비율"
          min="0"
          max="100"
          defaultValue="53"
          className="mx-2 h-4 w-[132px] appearance-none bg-transparent [&::-webkit-slider-runnable-track]:h-[3px] [&::-webkit-slider-runnable-track]:bg-[#c4c4c4] [&::-webkit-slider-thumb]:-mt-1.5 [&::-webkit-slider-thumb]:size-[15px] [&::-webkit-slider-thumb]:appearance-none [&::-webkit-slider-thumb]:rounded-full [&::-webkit-slider-thumb]:border-2 [&::-webkit-slider-thumb]:border-[#8f8f8f] [&::-webkit-slider-thumb]:bg-white"
        />
        <button aria-label="확대" className="flex h-full w-12 items-center justify-center">
          <ViewIcon>
            <rect x="4" y="4" width="14" height="14" fill="#c8c8c8" stroke="#7a7a7a" />
          </ViewIcon>
        </button>
        <button className="ml-3 flex items-center gap-2.5 text-[#5a5a5a]">
          <svg className="size-[22px]" viewBox="0 0 22 22" fill="none" stroke="#707070" strokeWidth="1.7">
            <circle cx="9" cy="9" r="7.7" />
            <path d="m14.500 14.500 6.500 6.500" strokeWidth="2.3" />
          </svg>
          125%
        </button>
      </div>
    </footer>
  );
}

export default function App() {
  return (
    <div className={`flex h-screen flex-col overflow-hidden border border-[#808080] bg-white text-lg leading-[25px] text-[#404040] ${FONT}`}>
      <TitleBar />
      <MenuBar />
      <div className="flex h-[119px] pl-[23px] pt-[3px]">
        {ribbon.map((group, i) => (
          <div key={i} className="flex">
            {i > 0 && <Divider className="ml-[11px] mr-[9px]" />}
            <div className="flex pb-px pt-0.5">
              {group.map((item) => (
                <RibbonButton key={item.icon} item={item} />
              ))}
            </div>
          </div>
        ))}
      </div>
      <FormatBar />
      <Workspace />
      <TabBar />
      <StatusBar />
    </div>
  );
}
